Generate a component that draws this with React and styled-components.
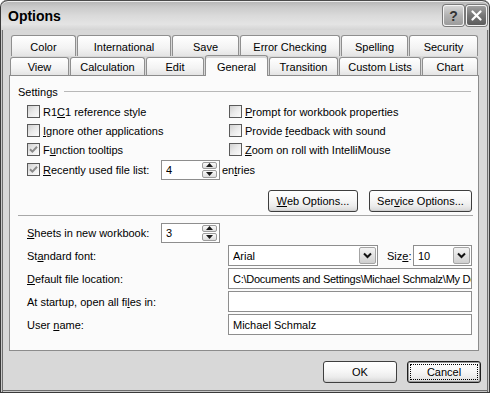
import React from 'react';
import styled, { createGlobalStyle } from 'styled-components';

const GlobalStyle = createGlobalStyle`
  html, body { margin: 0; padding: 0; background: #ffffff; }
  body { font-family: "Liberation Sans", Arial, sans-serif; font-size: 11px; color: #000; }
  * { box-sizing: border-box; }
  u { text-decoration: underline; text-underline-offset: 1px; }
`;

const Window = styled.div`
  width: 490px;
  height: 393px;
  background: #d8d8d8;
  border: 1px solid #3a3a3a;
  border-top: none;
  border-radius: 7px 7px 0 0;
  box-shadow: inset 1px 0 #c8c8c8, inset 2px 0 #6e6e6e, inset -1px 0 #c8c8c8,
    inset -2px 0 #6e6e6e, inset 0 -1px #c8c8c8, inset 0 -2px #6e6e6e;
  display: flex;
  flex-direction: column;
  overflow: hidden;
`;

const TitleBar = styled.div`
  height: 30px;
  flex: none;
  display: flex;
  align-items: center;
  padding: 0 2px 0 7px;
  border-top: 1px solid #4a4a4a;
  border-radius: 7px 7px 0 0;
  background: linear-gradient(180deg, #b4b4b4 0%, #c9c9c9 20%, #dadada 50%, #e4e4e4 80%, #d4d4d4 100%);
  box-shadow: inset 0 1px #ececec;
`;

const Title = styled.div`
  flex: 1;
  font-family: "Liberation Sans", Arial, sans-serif;
  font-weight: bold;
  font-size: 14px;
  color: #000;
  padding-top: 1px;
`;

const TitleButton = styled.div`
  width: 21px;
  height: 21px;
  margin-left: 2px;
  border: 1px solid #f4f4f4;
  border-radius: 3px;
  display: flex;
  align-items: center;
  justify-content: center;
  background: ${p => (p.$close
    ? 'linear-gradient(180deg, #a0a0a0 0%, #767676 50%, #5c5c5c 100%)'
    : 'linear-gradient(180deg, #d6d6d6 0%, #b2b2b2 50%, #9c9c9c 100%)')};
  box-shadow: 0 0 0 1px #7a7a7a;
  color: ${p => (p.$close ? '#fff' : '#333')};
  font-weight: bold;
  font-size: 14px;
  font-family: "Liberation Sans", Arial, sans-serif;
`;

const Body = styled.div`
  padding: 5px 10px 0 8px;
  flex: none;
`;

const TabRow = styled.div`
  display: flex;
  gap: 1px;
  align-items: flex-end;
  height: ${p => p.$h}px;
  padding-left: ${p => p.$indent}px;
`;

const Tab = styled.div`
  width: ${p => p.$w}px;
  height: ${p => (p.$active ? 21 : p.$h)}px;
  flex: none;
  border: 1px solid #8f8f8f;
  border-bottom: none;
  border-radius: 3px 3px 0 0;
  background: ${p => (p.$active ? '#fbfbfb' : 'linear-gradient(180deg, #ffffff 0%, #f3f3f3 60%, #e4e4e4 100%)')};
  display: flex;
  align-items: center;
  justify-content: center;
  padding-top: ${p => p.$pt}px;
  white-space: nowrap;
  position: ${p => (p.$active ? 'relative' : 'static')};
  top: ${p => (p.$active ? '1px' : '0')};
  z-index: ${p => (p.$active ? 2 : 'auto')};
  box-shadow: ${p => (p.$active ? 'inset 0 2px #d8d8d8' : 'none')};
`;

const Panel = styled.div`
  height: 276px;
  border: 1px solid #8c8c8c;
  background: #fbfbfb;
  padding: 9px 6px 0 8px;
`;

const Legend = styled.div`
  display: flex;
  align-items: center;
  gap: 6px;
  height: 13px;
`;

const LegendLine = styled.div`
  flex: 1;
  height: 1px;
  background: #b8b8b8;
  margin-right: 1px;
`;

const CheckGrid = styled.div`
  display: grid;
  grid-template-columns: 202px 1fr;
  margin-top: 4px;
  padding-left: 9px;
`;

const CheckRow = styled.div`
  display: flex;
  align-items: center;
  height: ${p => p.$h || 19}px;
  grid-column: ${p => (p.$span ? '1 / -1' : 'auto')};
  white-space: nowrap;
`;

const Box = styled.div`
  width: 13px;
  height: 13px;
  flex: none;
  margin-right: 3px;
  border: 1px solid #5a5a5a;
  background: linear-gradient(135deg, #d0d0d0 0%, #ebebeb 50%, #fbfbfb 100%);
  display: flex;
  align-items: center;
  justify-content: center;
`;

const Label = styled.span`
  display: inline-block;
  width: ${p => (p.$w ? `${p.$w}px` : 'auto')};
  flex: none;
  white-space: nowrap;
  margin-left: ${p => p.$ml || 0}px;
`;

const ButtonRow = styled.div`
  display: flex;
  justify-content: flex-end;
  gap: 11px;
  margin-top: 10px;
`;

const Button = styled.div`
  width: ${p => p.$w}px;
  height: 22px;
  flex: none;
  border: 1px solid ${p => (p.$default ? '#1e1e1e' : '#3e3e3e')};
  border-radius: 3px;
  background: linear-gradient(180deg, #ffffff 0%, #f7f7f7 45%, #ececec 75%, #d6d6d6 100%);
  box-shadow: ${p => (p.$default ? 'inset 0 0 0 1px #9a9a9a' : 'inset 0 -1px #cfcfcf')};
  display: flex;
  align-items: center;
  justify-content: center;
  white-space: nowrap;
  outline: ${p => (p.$focus ? '1px dotted #000' : 'none')};
  outline-offset: -4px;
`;

const Separator = styled.div`
  height: 1px;
  background: #a8a8a8;
  margin: 3px -1px 0 0;
`;

const Form = styled.div`
  display: flex;
  flex-direction: column;
  gap: 2px;
  margin-top: 6px;
  padding-left: 9px;
`;

const FormRow = styled.div`
  display: flex;
  align-items: center;
  height: 21px;
  white-space: nowrap;
`;

const TextBox = styled.div`
  width: ${p => p.$w}px;
  height: ${p => p.$h || 21}px;
  flex: none;
  border: 1px solid #8e8e8e;
  background: #fff;
  display: flex;
  align-items: center;
  padding-left: 4px;
  white-space: nowrap;
  overflow: hidden;
  letter-spacing: ${p => (p.$tight ? '-0.25px' : '0')};
  margin-left: ${p => (p.$auto ? 'auto' : '0')};
  margin-right: ${p => p.$mr || 0}px;
`;

const BoxText = styled.span`
  flex: 1;
  overflow: hidden;
  white-space: nowrap;
`;

const SpinCol = styled.div`
  display: flex;
  flex-direction: column;
  gap: 1px;
  padding: 1px 2px 1px 0;
  height: 100%;
  flex: none;
`;

const SpinButton = styled.div`
  width: 15px;
  flex: 1;
  border: 1px solid #9c9c9c;
  border-radius: 2px;
  background: linear-gradient(180deg, #fafafa, #dedede);
  display: flex;
  align-items: center;
  justify-content: center;
`;

const DropButton = styled.div`
  width: 17px;
  height: 17px;
  flex: none;
  margin-right: 1px;
  border: 1px solid #a4a4a4;
  border-radius: 2px;
  background: linear-gradient(180deg, #f4f4f4, #cfcfcf);
  display: flex;
  align-items: center;
  justify-content: center;
`;

const Footer = styled.div`
  display: flex;
  justify-content: flex-end;
  gap: 10px;
  padding: 10px 8px 0 0;
`;

const Check = () => (
  <svg width="9" height="9" viewBox="0 0 9 9">
    <path d="M1 4.2 L3.4 6.6 L8 1.8" fill="none" stroke="#8a8a8a" strokeWidth="2" />
  </svg>
);

const Arrow = ({ up }) => (
  <svg width="7" height="4" viewBox="0 0 7 4">
    <path d={up ? 'M0 4 L3.5 0 L7 4 Z' : 'M0 0 L3.5 4 L7 0 Z'} fill="#1a1a1a" />
  </svg>
);

const Chevron = () => (
  <svg width="9" height="7" viewBox="0 0 9 7">
    <path d="M1 1.5 L4.5 5 L8 1.5" fill="none" stroke="#111" strokeWidth="2" />
  </svg>
);

const CloseGlyph = () => (
  <svg width="11" height="11" viewBox="0 0 11 11">
    <path d="M1.5 1.5 L9.5 9.5 M9.5 1.5 L1.5 9.5" stroke="#fff" strokeWidth="2.2" strokeLinecap="round" />
  </svg>
);

const Spinner = ({ value, w, mr }) => (
  <TextBox $w={w} $h={20} $mr={mr}>
    <BoxText>{value}</BoxText>
    <SpinCol>
      <SpinButton><Arrow up /></SpinButton>
      <SpinButton><Arrow /></SpinButton>
    </SpinCol>
  </TextBox>
);

const Combo = ({ value, w, auto }) => (
  <TextBox $w={w} $auto={auto}>
    <BoxText>{value}</BoxText>
    <DropButton><Chevron /></DropButton>
  </TextBox>
);

const CheckItem = ({ checked, children }) => (
  <CheckRow>
    <Box>{checked && <Check />}</Box>
    <Label>{children}</Label>
  </CheckRow>
);

const row1 = [
  ['Color', 65], ['International', 94], ['Save', 67],
  ['Error Checking', 100], ['Spelling', 67], ['Security', 69],
];
const row2 = [
  ['View', 59], ['Calculation', 75], ['Edit', 58], ['General', 63, true],
  ['Transition', 69], ['Custom Lists', 82], ['Chart', 56],
];

export default function App() {
  return (
    <>
      <GlobalStyle />
      <Window>
        <TitleBar>
          <Title>Options</Title>
          <TitleButton>?</TitleButton>
          <TitleButton $close><CloseGlyph /></TitleButton>
        </TitleBar>
        <Body>
          <TabRow $h={21} $indent={2}>
            {row1.map(([t, w]) => (
              <Tab key={t} $w={w} $h={21} $pt={2}>{t}</Tab>
            ))}
          </TabRow>
          <TabRow $h={19} $indent={1}>
            {row2.map(([t, w, a]) => (
              <Tab key={t} $w={w} $h={18} $pt={1} $active={a}>{t}</Tab>
            ))}
          </TabRow>
          <Panel>
            <Legend>
              <span>Settings</span>
              <LegendLine />
            </Legend>
            <CheckGrid>
              <CheckItem>R1<u>C</u>1 reference style</CheckItem>
              <CheckItem><u>P</u>rompt for workbook properties</CheckItem>
              <CheckItem><u>I</u>gnore other applications</CheckItem>
              <CheckItem>Provide <u>f</u>eedback with sound</CheckItem>
              <CheckItem checked>F<u>u</u>nction tooltips</CheckItem>
              <CheckItem><u>Z</u>oom on roll with IntelliMouse</CheckItem>
              <CheckRow $span $h={21}>
                <Box><Check /></Box>
                <Label $w={118}><u>R</u>ecently used file list:</Label>
                <Spinner value="4" w={59} mr={2} />
                <Label>en<u>t</u>ries</Label>
              </CheckRow>
            </CheckGrid>
            <ButtonRow>
              <Button $w={90}><u>W</u>eb Options...</Button>
              <Button $w={103}>Ser<u>v</u>ice Options...</Button>
            </ButtonRow>
            <Separator />
            <Form>
              <FormRow>
                <Label $w={134}><u>S</u>heets in new workbook:</Label>
                <Spinner value="3" w={59} />
              </FormRow>
              <FormRow>
                <Label $w={201}>St<u>a</u>ndard font:</Label>
                <Combo value="Arial" w={150} />
                <Label $ml={9}>Siz<u>e</u>:</Label>
                <Combo value="10" w={59} auto />
              </FormRow>
              <FormRow>
                <Label $w={201}><u>D</u>efault file location:</Label>
                <TextBox $w={244} $tight>C:\Documents and Settings\Michael Schmalz\My Documents</TextBox>
              </FormRow>
              <FormRow>
                <Label $w={201}>At startup, open all fi<u>l</u>es in:</Label>
                <TextBox $w={244} />
              </FormRow>
              <FormRow>
                <Label $w={201}>User <u>n</u>ame:</Label>
                <TextBox $w={244}>Michael Schmalz</TextBox>
              </FormRow>
            </Form>
          </Panel>
        </Body>
        <Footer>
          <Button $w={74}>OK</Button>
          <Button $w={74} $default $focus>Cancel</Button>
        </Footer>
      </Window>
    </>
  );
}
